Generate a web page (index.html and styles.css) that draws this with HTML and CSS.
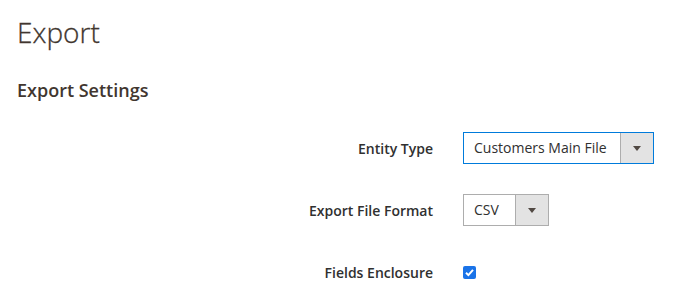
FILE: index.html
```html
<!DOCTYPE html>
<html lang="en">
<head>
    <meta charset="UTF-8">
    <meta name="viewport" content="width=device-width, initial-scale=1.0">
    <title>Export</title>
    <link rel="stylesheet" href="styles.css">
</head>
<body>
    <div class="page">
        <h1 class="page-title">Export</h1>
        <h2 class="section-title">Export Settings</h2>

        <form class="settings">
            <div class="field">
                <label class="field-label">Entity Type</label>
                <div class="select select-focus select-wide">
                    <span class="select-value">Customers Main File</span>
                    <span class="select-arrow"></span>
                </div>
            </div>

            <div class="field">
                <label class="field-label">Export File Format</label>
                <div class="select select-narrow">
                    <span class="select-value">CSV</span>
                    <span class="select-arrow"></span>
                </div>
            </div>

            <div class="field">
                <label class="field-label">Fields Enclosure</label>
                <span class="checkbox">
                    <svg width="13" height="13" viewBox="0 0 13 13">
                        <path d="M3 6.8 L5.4 9.1 L10 3.9" fill="none" stroke="#fff" stroke-width="2"/>
                    </svg>
                </span>
            </div>
        </form>
    </div>
</body>
</html>
```

FILE: styles.css
```css
body {
    margin: 0;
    background: #ffffff;
    font-family: 'Open Sans', sans-serif;
    color: #303030;
}

.page {
    padding: 15px 0 0 0;
}

.page-title {
    margin: 0 0 0 17px;
    font-size: 28px;
    font-weight: 300;
    line-height: 34px;
    color: #41362f;
    -webkit-text-stroke: 0.3px #41362f;
}

.section-title {
    margin: 29px 0 0 17px;
    font-size: 18px;
    font-weight: 600;
    line-height: 24px;
    color: #41362f;
}

.settings {
    margin-top: 30px;
}

.field {
    display: flex;
    align-items: center;
    height: 32px;
    margin-bottom: 30px;
}

.field-label {
    width: 433px;
    margin-right: 30px;
    text-align: right;
    font-size: 14px;
    font-weight: 600;
    color: #303030;
}

.select {
    display: flex;
    align-items: stretch;
    height: 32px;
    box-sizing: border-box;
    border: 1px solid #adadad;
    font-size: 14px;
    background: #fff;
}

.select-focus {
    border-color: #007bdb;
}

.select-wide {
    width: 191px;
}

.select-narrow {
    width: 86px;
}

.select-value {
    flex: 1;
    padding-left: 10px;
    line-height: 30px;
    white-space: nowrap;
}

.select-arrow {
    width: 32px;
    background: #e3e3e3;
    border-left: 1px solid #adadad;
    position: relative;
}

.select-arrow::after {
    content: "";
    position: absolute;
    left: 50%;
    top: 50%;
    margin: -2px 0 0 -4px;
    border-left: 4px solid transparent;
    border-right: 4px solid transparent;
    border-top: 5px solid #514943;
}

.checkbox {
    width: 13px;
    height: 13px;
    border-radius: 2px;
    background: #1a73e8;
    display: flex;
}
```
